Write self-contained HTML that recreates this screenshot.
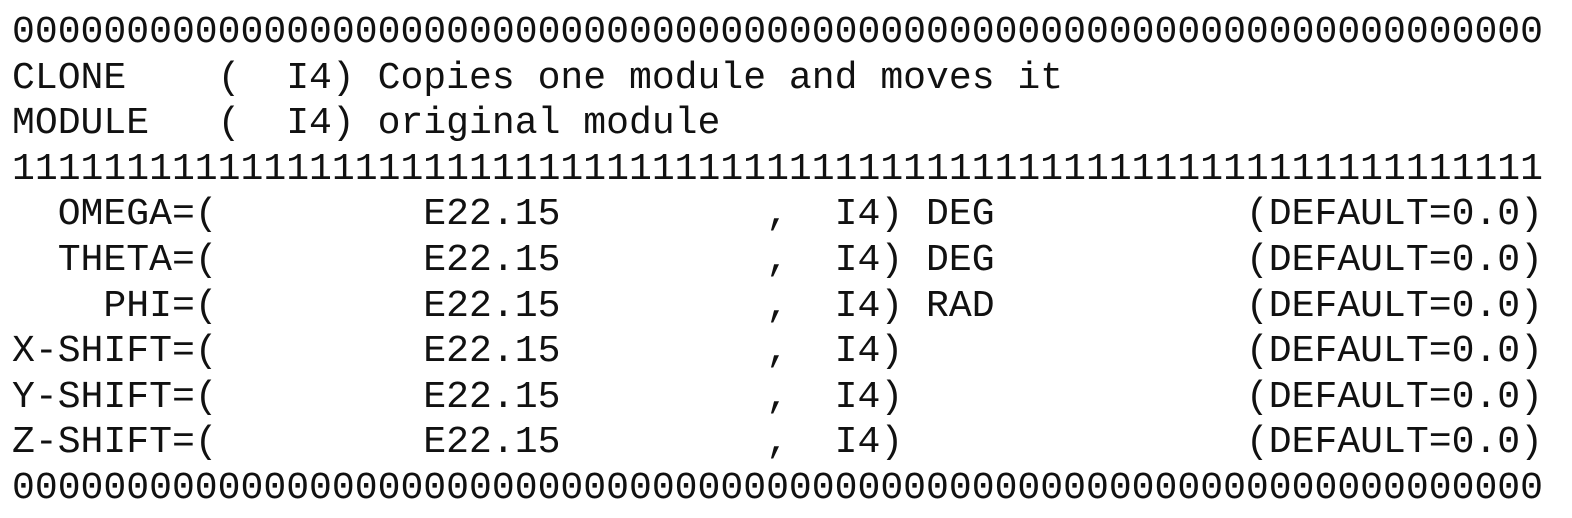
<!DOCTYPE html>
<html><head><meta charset="utf-8"><style>
html,body{margin:0;padding:0;background:#fff;width:1572px;height:518px;overflow:hidden}
pre{position:absolute;left:12px;top:10px;margin:0;font-family:"Liberation Mono",monospace;font-size:38.1px;line-height:45.6px;color:#111;}
</style></head><body><pre>0000000000000000000000000000000000000000000000000000000000000000000
CLONE    (  I4) Copies one module and moves it
MODULE   (  I4) original module
1111111111111111111111111111111111111111111111111111111111111111111
  OMEGA=(         E22.15         ,  I4) DEG           (DEFAULT=0.0)
  THETA=(         E22.15         ,  I4) DEG           (DEFAULT=0.0)
    PHI=(         E22.15         ,  I4) RAD           (DEFAULT=0.0)
X-SHIFT=(         E22.15         ,  I4)               (DEFAULT=0.0)
Y-SHIFT=(         E22.15         ,  I4)               (DEFAULT=0.0)
Z-SHIFT=(         E22.15         ,  I4)               (DEFAULT=0.0)
0000000000000000000000000000000000000000000000000000000000000000000</pre></body></html>
